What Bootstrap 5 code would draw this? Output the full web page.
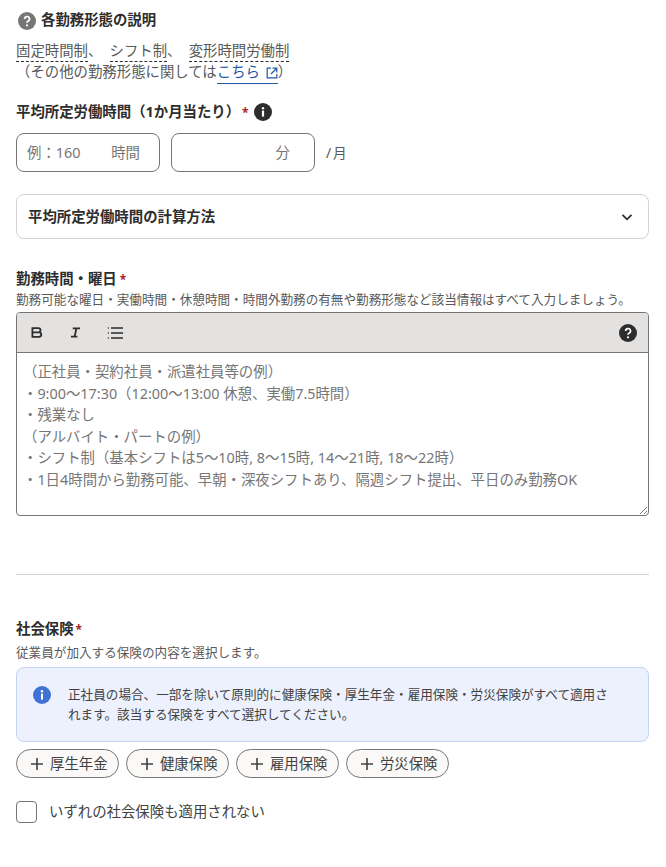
<!doctype html>
<html lang="ja"><head><meta charset="utf-8">
<link href="https://cdn.jsdelivr.net/npm/bootstrap@5.3.0/dist/css/bootstrap.min.css" rel="stylesheet">
<style>
html,body{height:867px;overflow:hidden}
body{font-family:"Noto Sans","Noto Sans CJK JP",sans-serif;color:#2d2d2d;background:#fff;font-size:14.4px}
.pg{padding:0 17px 0 16px;width:666px}
.hlp{height:40px;padding:12px 0 0 2px}
.hlp b{font-size:14.4px;font-weight:700;line-height:16px;color:#2d2d2d;margin-left:5px}
.desc{font-size:14.4px;line-height:21px;color:#595959;height:44px}
.dot{border-bottom:1px dashed #2d2d2d;padding-bottom:1px}
.sep{margin-right:3.4px}
.lnk{color:#2557a7;border-bottom:1px solid #2557a7;text-decoration:none;padding-bottom:2px}
.lnk svg{margin-left:2px}
.lbl{font-size:14.4px;font-weight:700;line-height:20px;color:#2d2d2d}
.req{color:#a9252b;font-size:12px;margin-left:2px}
.req3{margin-left:3px}
.inp{width:144px;height:39px;border:1px solid #767676;border-radius:8px;padding:0 19px 0 10px;font-size:14.4px;color:#767676}
.acc{height:45px;border:1px solid #d4d2d0;border-radius:8px;padding:0 14px 0 11px;font-size:14.4px;font-weight:700}
.sub{font-size:12.6px;line-height:16px;color:#595959}
.edt{border:1px solid #767676;border-radius:4px;height:204px;position:relative;overflow:hidden}
.tbar{height:40px;background:#e4e2e0;border-bottom:1px solid #767676;padding:0 11px 0 14px}
.ph{padding:8px 6px;font-size:14.4px;line-height:21.6px;color:#767676;white-space:pre}
.grip{position:absolute;right:0;bottom:0}
.rule{border-top:1px solid #d4d2d0}
.note{background:#ecf1fd;border:1px solid #c4d3f5;border-radius:8px;height:75px;padding:17px 30px 0 16px;font-size:12.6px;line-height:20px;color:#424242}
.pillx{height:29px;border:1px solid #767676;border-radius:15px;background:#faf9f8;font-size:14.4px;padding:0 10.4px 0 13px;color:#424242;gap:6px}
.cbx{width:21px;height:22px;border:1px solid #767676;border-radius:4px}
.per{color:#595959;font-size:14px;word-spacing:-2px}
</style></head><body>
<div class="pg">
<div class="hlp d-flex align-items-start"><svg width="18" height="18" viewBox="0 0 18 18"><circle cx="9" cy="9" r="9" fill="#767676"/><path d="M6.7 7a2.4 2.4 0 1 1 3.6 2c-.9.5-1.3.9-1.3 1.8" fill="none" stroke="#fff" stroke-width="1.7"/><circle cx="9" cy="13.3" r="1.1" fill="#fff"/></svg><b>各勤務形態の説明</b></div>
<div class="desc"><span class="dot">固定時間制</span><span class="sep">、</span> <span class="dot">シフト制</span><span class="sep">、</span> <span class="dot">変形時間労働制</span><br>（その他の勤務形態に関しては<a class="lnk" href="#">こちら <svg width="12" height="12" viewBox="0 0 12 12" fill="none" stroke="#2557a7" stroke-width="1.2"><path d="M5 1.2H1.2v9.6h9.6V7M6.5 1.2h4.3v4.3M10.5 1.5 5 7"/></svg></a>）</div>
<div class="lbl d-flex align-items-center" style="margin-top:18px;height:20px;gap:5px"><span>平均所定労働時間（1か月当たり）<span class="req">*</span></span><svg width="18" height="18" viewBox="0 0 18 18"><circle cx="9" cy="9" r="9" fill="#2d2d2d"/><circle cx="9" cy="5.3" r="1.2" fill="#fff"/><rect x="7.9" y="7.6" width="2.2" height="6" fill="#fff"/></svg></div>
<div class="d-flex align-items-center" style="margin-top:11px;gap:11px">
<div class="inp d-flex align-items-center justify-content-between"><span>例：160</span><span>時間</span></div>
<div class="inp d-flex align-items-center justify-content-end" style="padding-right:24px"><span>分</span></div>
<span class="per">/ 月</span></div>
<div class="acc d-flex align-items-center justify-content-between" style="margin-top:22px"><span>平均所定労働時間の計算方法</span><svg width="14" height="14" viewBox="0 0 14 14" fill="none" stroke="#2d2d2d" stroke-width="1.8"><path d="M2.5 4.8 7 9.3l4.5-4.5"/></svg></div>
<div class="lbl" style="margin-top:30px">勤務時間・曜日<span class="req req3">*</span></div>
<div class="sub" style="margin-top:2px">勤務可能な曜日・実働時間・休憩時間・時間外勤務の有無や勤務形態など該当情報はすべて入力しましょう。</div>
<div class="edt" style="margin-top:4px">
<div class="tbar d-flex align-items-center justify-content-between"><div class="d-flex align-items-center"><svg width="12" height="11" viewBox="1 0 12 12" fill="none" stroke="#2d2d2d" stroke-width="2"><path d="M2 1.2h6.5a2.3 2.3 0 0 1 0 4.6H2V1.2Zm0 4.6h7.2a2.4 2.4 0 0 1 0 4.9H2V5.8Z"/></svg><svg style="margin-left:27px" width="11" height="11" viewBox="0 0 12 12" fill="none" stroke="#2d2d2d" stroke-width="2"><path d="M3 1.5h8M1 10.5h7M7 1.5 5 10.5"/></svg><svg style="margin-left:26px" width="17" height="14" viewBox="0 0 17 14" fill="none" stroke="#2d2d2d" stroke-width="1.4"><path d="M4 2h12M4 7h12M4 12h12M.8 2h1M.8 7h1M.8 12h1"/></svg></div>
<svg width="18" height="18" viewBox="0 0 18 18"><circle cx="9" cy="9" r="9" fill="#2d2d2d"/><path d="M6.7 7a2.4 2.4 0 1 1 3.6 2c-.9.5-1.3.9-1.3 1.8" fill="none" stroke="#fff" stroke-width="1.7"/><circle cx="9" cy="13.3" r="1.1" fill="#fff"/></svg></div>
<div class="ph">（正社員・契約社員・派遣社員等の例）
・9:00〜17:30（12:00〜13:00 休憩、実働7.5時間）
・残業なし
（アルバイト・パートの例）
・シフト制（基本シフトは5〜10時, 8〜15時, 14〜21時, 18〜22時）
・1日4時間から勤務可能、早朝・深夜シフトあり、隔週シフト提出、平日のみ勤務OK</div>
<svg class="grip" width="10" height="10" viewBox="0 0 10 10" stroke="#767676" stroke-width="1"><path d="M9 2 2 9M9 6 6 9"/></svg>
</div>
<div class="rule" style="margin-top:58px"></div>
<div class="lbl" style="margin-top:44px">社会保険<span class="req">*</span></div>
<div class="sub" style="margin-top:5px">従業員が加入する保険の内容を選択します。</div>
<div class="note d-flex" style="margin-top:6px"><svg class="flex-shrink-0" style="margin-top:1px" width="18" height="18" viewBox="0 0 18 18"><circle cx="9" cy="9" r="9" fill="#3f73d3"/><circle cx="9" cy="5.3" r="1.2" fill="#fff"/><rect x="8" y="7.6" width="2" height="6" fill="#fff"/></svg><div style="margin-left:17px">正社員の場合、一部を除いて原則的に健康保険・厚生年金・雇用保険・労災保険がすべて適用されます。該当する保険をすべて選択してください。</div></div>
<div class="d-flex" style="margin-top:7px;gap:7px">
<div class="pillx d-flex align-items-center"><svg width="14" height="14" viewBox="0 0 14 14" stroke="#424242" stroke-width="1.6"><path d="M7 1v12M1 7h12"/></svg>厚生年金</div>
<div class="pillx d-flex align-items-center"><svg width="14" height="14" viewBox="0 0 14 14" stroke="#424242" stroke-width="1.6"><path d="M7 1v12M1 7h12"/></svg>健康保険</div>
<div class="pillx d-flex align-items-center"><svg width="14" height="14" viewBox="0 0 14 14" stroke="#424242" stroke-width="1.6"><path d="M7 1v12M1 7h12"/></svg>雇用保険</div>
<div class="pillx d-flex align-items-center"><svg width="14" height="14" viewBox="0 0 14 14" stroke="#424242" stroke-width="1.6"><path d="M7 1v12M1 7h12"/></svg>労災保険</div>
</div>
<div class="d-flex align-items-center" style="margin-top:23px;gap:12px"><div class="cbx"></div><span style="font-size:14.4px;color:#424242">いずれの社会保険も適用されない</span></div>
</div>
<script src="https://cdn.jsdelivr.net/npm/bootstrap@5.3.0/dist/js/bootstrap.bundle.min.js"></script>
</body></html>
